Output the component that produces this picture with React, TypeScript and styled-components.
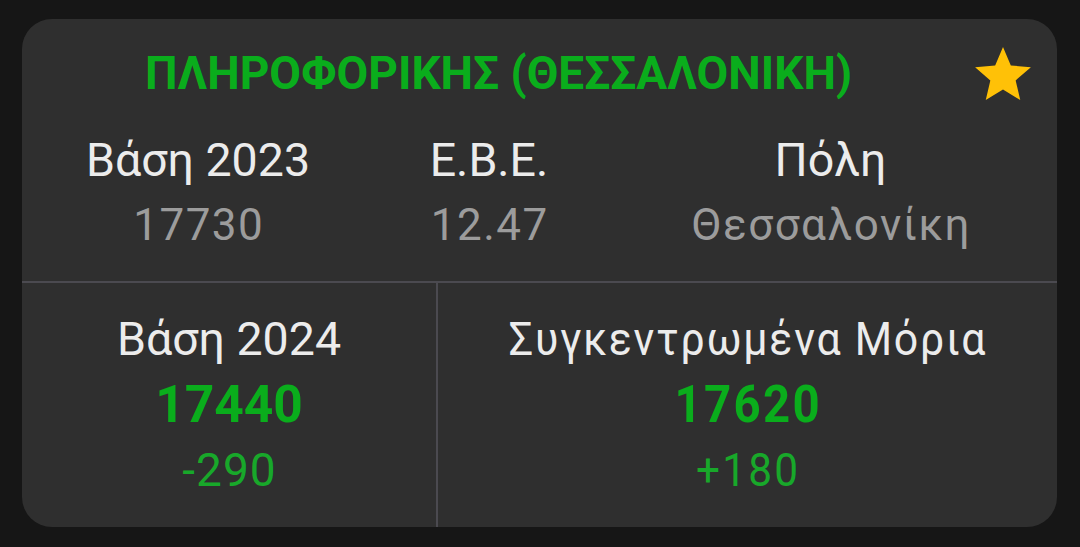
import styled, { createGlobalStyle } from 'styled-components';

const GlobalStyle = createGlobalStyle`
  html, body {
    margin: 0;
    padding: 0;
    background: #161616;
  }
  body {
    font-family: Roboto, 'Noto Sans', sans-serif;
  }
`;

type StatPropsType = {
  label: string;
  value: string;
};

type ScorePropsType = {
  label: string;
  value: string;
  delta: string;
  narrow?: boolean;
};

const Star = () => (
  <StarIcon viewBox="2 2 20 19" aria-hidden>
    <path d="M12 17.27L18.18 21l-1.64-7.03L22 9.24l-7.19-.61L12 2 9.19 8.63 2 9.24l5.46 4.73L5.82 21z" />
  </StarIcon>
);

const Stat = ({ label, value }: StatPropsType) => (
  <StatCell>
    <Label>{label}</Label>
    <Value>{value}</Value>
  </StatCell>
);

const Score = ({ label, value, delta, narrow }: ScorePropsType) => (
  <ScoreCell>
    <ScoreInner $narrow={narrow}>
      <Label $spacing={narrow ? 1.9 : 0}>{label}</Label>
      <BigValue $spacing={narrow ? 2.5 : 0}>{value}</BigValue>
      <Delta $spacing={narrow ? 2.4 : 1}>{delta}</Delta>
    </ScoreInner>
  </ScoreCell>
);

const App = () => {
  return (
    <Page>
      <GlobalStyle />
      <Card>
        <Header>
          <Title>ΠΛΗΡΟΦΟΡΙΚΗΣ (ΘΕΣΣΑΛΟΝΙΚΗ)</Title>
          <Star />
        </Header>
        <StatsRow>
          <Stat label="Βάση 2023" value="17730" />
          <Stat label="Ε.Β.Ε." value="12.47" />
          <Stat label="Πόλη" value="Θεσσαλονίκη" />
        </StatsRow>
        <ScoresRow>
          <Score label="Βάση 2024" value="17440" delta="-290" />
          <Score label="Συγκεντρωμένα Μόρια" value="17620" delta="+180" narrow />
        </ScoresRow>
      </Card>
    </Page>
  );
};

const Page = styled.div`
  width: 1080px;
  height: 547px;
  padding: 19px 23px 20px 22px;
  box-sizing: border-box;
`;

const Card = styled.div`
  height: 100%;
  background: #2f2f2f;
  border-radius: 30px;
  overflow: hidden;
  display: flex;
  flex-direction: column;
`;

const Header = styled.div`
  display: flex;
  align-items: center;
  padding: 24px 26px 0 0;
`;

const Title = styled.h2`
  flex: 1;
  margin: 0;
  text-align: center;
  font-size: 46px;
  line-height: 60px;
  font-weight: 700;
  color: #0aad1c;
`;

const StarIcon = styled.svg`
  width: 56px;
  height: 53px;
  fill: #ffc107;
`;

const StatsRow = styled.div`
  display: grid;
  grid-template-columns: 352px 230px 1fr;
  padding: 25px 0 24px;
  border-bottom: 2px solid #4b4a50;
`;

const StatCell = styled.div`
  display: flex;
  flex-direction: column;
  align-items: center;
`;

const Label = styled.div<{ $spacing?: number }>`
  font-size: 46.5px;
  line-height: 64px;
  color: #ececec;
  white-space: nowrap;
  letter-spacing: ${({ $spacing = 0 }) => $spacing}px;
  margin-right: ${({ $spacing = 0 }) => -$spacing}px;
`;

const Value = styled.div`
  font-size: 44px;
  line-height: 64px;
  margin: 1px -1.5px 0 0;
  color: #9c9c9c;
  letter-spacing: 1.5px;
`;

const ScoresRow = styled.div`
  flex: 1;
  display: grid;
  grid-template-columns: 414px 1fr;
`;

const ScoreCell = styled.div`
  display: flex;
  justify-content: center;
  padding-top: 24px;

  & + & {
    border-left: 2px solid #4b4a50;
  }
`;

const ScoreInner = styled.div<{ $narrow?: boolean }>`
  display: flex;
  flex-direction: column;
  align-items: center;
  transform: ${({ $narrow }) => ($narrow ? 'scaleX(0.92)' : 'none')};
`;

const BigValue = styled.div<{ $spacing?: number }>`
  font-size: 51.5px;
  line-height: 64px;
  margin-top: 2px;
  font-weight: 700;
  color: #0aad1c;
  letter-spacing: ${({ $spacing = 0 }) => $spacing}px;
  margin-right: ${({ $spacing = 0 }) => -$spacing}px;
`;

const Delta = styled.div<{ $spacing?: number }>`
  font-size: 46px;
  line-height: 64px;
  margin-top: 1px;
  color: #18a82a;
  letter-spacing: ${({ $spacing = 0 }) => $spacing}px;
  margin-right: ${({ $spacing = 0 }) => -$spacing}px;
`;

export default App;
